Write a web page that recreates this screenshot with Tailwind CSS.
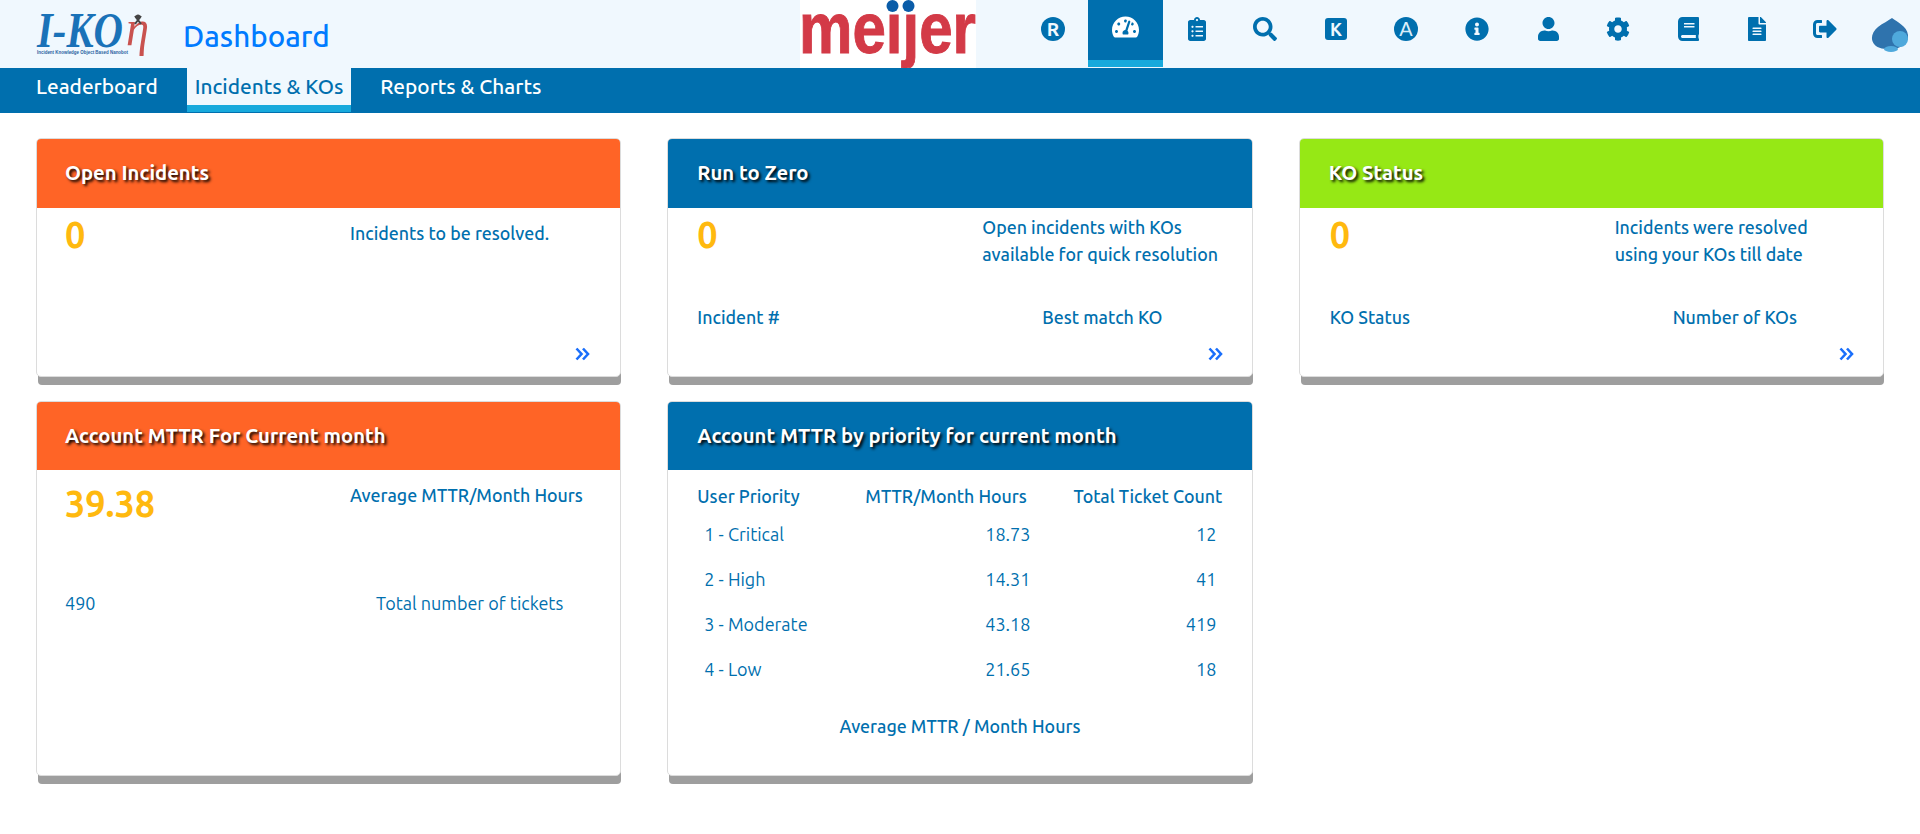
<!DOCTYPE html>
<html lang="en">
<head>
<meta charset="UTF-8">
<title>Dashboard</title>
<script src="https://cdn.jsdelivr.net/npm/@tailwindcss/browser@4"></script>
</head>
<body class="bg-white font-['Ubuntu','Noto_Sans',sans-serif] text-[#006fae] text-[18px] min-h-screen">

<!-- top bar -->
<header class="h-[68px] bg-[#f0f8fe] flex">
  <div class="w-[183px] shrink-0">
    <svg class="overflow-visible" width="183" height="68" viewBox="0 0 183 68">
      <text x="37" y="47" textLength="86" lengthAdjust="spacingAndGlyphs" font-family="Liberation Serif" font-style="italic" font-weight="700" font-size="50" fill="#1a72b8">I-KO</text>
      <text x="126" y="45" textLength="23" lengthAdjust="spacingAndGlyphs" font-family="Liberation Serif" font-style="italic" font-size="50" fill="#c9524f">η</text>
      <path d="M135 16l6 8M141 16l-6 8" stroke="#444" stroke-width="2"/>
      <circle cx="138" cy="17" r="2.500" fill="#444"/>
      <text x="37" y="54" textLength="91" lengthAdjust="spacingAndGlyphs" font-family="Liberation Sans" font-weight="700" font-size="5" fill="#2b5f9e">Incident Knowledge Object Based Nanobot</text>
    </svg>
  </div>
  <div class="w-[617px] shrink-0 text-[29.600px] font-medium text-[#007bff] leading-[72px]">Dashboard</div>
  <div class="w-[176px] shrink-0 bg-white">
    <svg class="overflow-visible" width="176" height="68" viewBox="0 0 176 68">
      <defs><clipPath id="meijer-clip"><rect x="0" y="13" width="176" height="55"/></clipPath></defs>
      <text x="-1" y="53" textLength="177" lengthAdjust="spacingAndGlyphs" clip-path="url(#meijer-clip)" font-family="Liberation Sans" font-weight="700" font-size="72" fill="#d33a47" stroke="#d33a47" stroke-width="1">meijer</text>
      <circle cx="92.500" cy="6" r="6" fill="#0a5ca8"/>
      <circle cx="108.500" cy="6" r="6" fill="#0a5ca8"/>
    </svg>
  </div>
  <div class="w-[41px] shrink-0"></div>
  <nav class="flex text-[#006fae]">
    <a class="w-[71px] h-[68px] flex items-center justify-center pb-[10px]">
      <svg class="h-6 w-6" viewBox="0 0 24 24"><circle cx="12" cy="12" r="12" fill="currentColor"/><text x="12" y="18.500" text-anchor="middle" font-family="Ubuntu" font-weight="700" font-size="19" fill="#f0f8fe">R</text></svg>
    </a>
    <a class="w-[75px] h-[67px] flex items-center justify-center pb-[7px] bg-[#006fae] border-b-[7px] border-[#17a9dc] text-white">
      <svg class="h-6" viewBox="0 0 576 512" fill="currentColor"><path d="M288 32C128.94 32 0 160.94 0 320c0 52.8 14.25 102.26 39.06 144.8 5.61 9.62 16.3 15.2 27.44 15.2h443c11.14 0 21.83-5.58 27.44-15.2C561.75 422.26 576 372.8 576 320c0-159.06-128.94-288-288-288zm0 64c14.71 0 26.58 10.13 30.32 23.65-1.11 2.26-2.64 4.23-3.45 6.67l-9.22 27.67c-5.13 3.49-10.97 6.01-17.64 6.01-17.67 0-32-14.33-32-32S270.33 96 288 96zM96 384c-17.67 0-32-14.33-32-32s14.33-32 32-32 32 14.33 32 32-14.33 32-32 32zm48-160c-17.67 0-32-14.33-32-32s14.33-32 32-32 32 14.33 32 32-14.33 32-32 32zm246.77-72.41l-61.33 184C343.13 347.33 352 364.54 352 384c0 11.72-3.38 22.55-8.88 32H232.88c-5.5-9.45-8.88-20.28-8.88-32 0-33.94 26.5-61.43 59.9-63.59l61.34-184.01c4.17-12.56 17.73-19.45 30.36-15.17 12.57 4.19 19.35 17.79 15.17 30.36zm14.66 57.2l15.52-46.55c3.47-1.29 7.13-2.23 11.05-2.23 17.67 0 32 14.33 32 32s-14.33 32-32 32c-11.38-.01-20.89-6.28-26.57-15.22zM480 384c-17.67 0-32-14.33-32-32s14.33-32 32-32 32 14.33 32 32-14.33 32-32 32z"/></svg>
    </a>
    <a class="w-[67px] h-[68px] flex items-center justify-center pb-[10px]">
      <svg class="h-6" viewBox="0 0 384 512" fill="currentColor"><path d="M336 64h-80c0-35.3-28.7-64-64-64s-64 28.7-64 64H48C21.5 64 0 85.5 0 112v352c0 26.5 21.5 48 48 48h288c26.5 0 48-21.5 48-48V112c0-26.500-21.500-48-48-48zM96 424c-13.300 0-24-10.700-24-24s10.700-24 24-24 24 10.700 24 24-10.700 24-24 24zm0-96c-13.300 0-24-10.700-24-24s10.700-24 24-24 24 10.700 24 24-10.700 24-24 24zm0-96c-13.300 0-24-10.700-24-24s10.700-24 24-24 24 10.700 24 24-10.700 24-24 24zm96-192c13.300 0 24 10.700 24 24s-10.700 24-24 24-24-10.700-24-24 10.700-24 24-24zm128 368c0 4.400-3.600 8-8 8H168c-4.400 0-8-3.600-8-8v-16c0-4.400 3.600-8 8-8h144c4.400 0 8 3.600 8 8v16zm0-96c0 4.400-3.600 8-8 8H168c-4.400 0-8-3.600-8-8v-16c0-4.400 3.600-8 8-8h144c4.400 0 8 3.600 8 8v16zm0-96c0 4.400-3.600 8-8 8H168c-4.400 0-8-3.600-8-8v-16c0-4.400 3.600-8 8-8h144c4.400 0 8 3.600 8 8v16z"/></svg>
    </a>
    <a class="w-[70px] h-[68px] flex items-center justify-center pb-[10px]">
      <svg class="h-6" viewBox="0 0 512 512" fill="currentColor"><path d="M505 442.700L405.300 343c-4.500-4.500-10.600-7-17-7H372c27.600-35.300 44-79.700 44-128C416 93.100 322.900 0 208 0S0 93.100 0 208s93.100 208 208 208c48.300 0 92.700-16.400 128-44v16.300c0 6.400 2.500 12.500 7 17l99.700 99.700c9.400 9.400 24.600 9.400 33.900 0l28.300-28.300c9.400-9.400 9.400-24.600.1-34zM208 336c-70.700 0-128-57.200-128-128 0-70.700 57.200-128 128-128 70.700 0 128 57.200 128 128 0 70.700-57.200 128-128 128z"/></svg>
    </a>
    <a class="w-[71px] h-[68px] flex items-center justify-center pb-[10px]">
      <svg class="h-6 w-[22px]" viewBox="0 0 22 24"><rect y="1" width="22" height="22" rx="3" fill="currentColor"/><text x="11" y="19" text-anchor="middle" font-family="Ubuntu" font-weight="700" font-size="18" fill="#f0f8fe">K</text></svg>
    </a>
    <a class="w-[70px] h-[68px] flex items-center justify-center pb-[10px]">
      <svg class="h-6 w-6" viewBox="0 0 24 24"><circle cx="12" cy="12" r="12" fill="currentColor"/><text x="12" y="18.500" text-anchor="middle" font-family="Liberation Sans" font-size="20" fill="#dbeefa">A</text></svg>
    </a>
    <a class="w-[72px] h-[68px] flex items-center justify-center pb-[10px]">
      <svg class="h-6" viewBox="0 0 512 512" fill="currentColor"><path d="M256 8C119.043 8 8 119.083 8 256c0 136.997 111.043 248 248 248s248-111.003 248-248C504 119.083 392.957 8 256 8zm0 110c23.196 0 42 18.804 42 42s-18.804 42-42 42-42-18.804-42-42 18.804-42 42-42zm56 254c0 6.627-5.373 12-12 12h-88c-6.627 0-12-5.373-12-12v-24c0-6.627 5.373-12 12-12h12v-64h-12c-6.627 0-12-5.373-12-12v-24c0-6.627 5.373-12 12-12h64c6.627 0 12 5.373 12 12v100h12c6.627 0 12 5.373 12 12v24z"/></svg>
    </a>
    <a class="w-[70px] h-[68px] flex items-center justify-center pb-[10px]">
      <svg class="h-6" viewBox="0 0 448 512" fill="currentColor"><path d="M224 256c70.700 0 128-57.300 128-128S294.700 0 224 0 96 57.300 96 128s57.300 128 128 128zm89.600 32h-16.700c-22.200 10.200-46.900 16-72.900 16s-50.600-5.800-72.900-16h-16.700C60.200 288 0 348.200 0 422.400V464c0 26.500 21.500 48 48 48h352c26.500 0 48-21.500 48-48v-41.600c0-74.200-60.200-134.400-134.400-134.400z"/></svg>
    </a>
    <a class="w-[70px] h-[68px] flex items-center justify-center pb-[10px]">
      <svg class="h-6" viewBox="0 0 512 512" fill="currentColor"><path d="M487.400 315.700l-42.600-24.600c4.300-23.200 4.300-47 0-70.200l42.600-24.600c4.900-2.800 7.100-8.600 5.500-14-11.100-35.600-30-67.800-54.700-94.600-3.800-4.100-10-5.100-14.800-2.300L380.800 110c-17.900-15.400-38.500-27.300-60.800-35.100V25.800c0-5.600-3.900-10.500-9.400-11.700-36.700-8.200-74.300-7.800-109.200 0-5.500 1.200-9.400 6.100-9.400 11.700V75c-22.200 7.900-42.800 19.800-60.800 35.100L88.700 85.500c-4.900-2.800-11-1.900-14.800 2.300-24.700 26.700-43.600 58.900-54.700 94.600-1.700 5.400.6 11.200 5.500 14L67.300 221c-4.300 23.200-4.300 47 0 70.200l-42.600 24.600c-4.900 2.800-7.100 8.600-5.500 14 11.100 35.600 30 67.800 54.700 94.600 3.800 4.100 10 5.100 14.800 2.300l42.600-24.600c17.900 15.400 38.500 27.300 60.800 35.100v49.200c0 5.600 3.900 10.500 9.400 11.700 36.700 8.200 74.300 7.800 109.200 0 5.500-1.200 9.400-6.100 9.400-11.700v-49.200c22.200-7.900 42.800-19.800 60.800-35.100l42.600 24.600c4.900 2.800 11 1.900 14.800-2.300 24.700-26.700 43.600-58.900 54.700-94.600 1.500-5.500-.7-11.300-5.600-14.100zM256 336c-44.100 0-80-35.900-80-80s35.900-80 80-80 80 35.900 80 80-35.900 80-80 80z"/></svg>
    </a>
    <a class="w-[71px] h-[68px] flex items-center justify-center pb-[10px]">
      <svg class="h-6" viewBox="0 0 448 512" fill="currentColor"><path d="M448 360V24c0-13.300-10.700-24-24-24H96C43 0 0 43 0 96v320c0 53 43 96 96 96h328c13.300 0 24-10.700 24-24v-16c0-7.500-3.500-14.300-8.900-18.700-4.200-15.400-4.200-59.300 0-74.700 5.400-4.300 8.900-11.100 8.900-18.600zM128 134c0-3.300 2.700-6 6-6h212c3.300 0 6 2.700 6 6v20c0 3.300-2.700 6-6 6H134c-3.300 0-6-2.700-6-6v-20zm0 64c0-3.300 2.700-6 6-6h212c3.300 0 6 2.700 6 6v20c0 3.300-2.700 6-6 6H134c-3.300 0-6-2.700-6-6v-20zm253.400 250H96c-17.700 0-32-14.300-32-32 0-17.600 14.400-32 32-32h285.400c-1.900 17.100-1.900 46.900 0 64z"/></svg>
    </a>
    <a class="w-[66px] h-[68px] flex items-center justify-center pb-[10px]">
      <svg class="h-6" viewBox="0 0 384 512" fill="currentColor"><path d="M224 136V0H24C10.700 0 0 10.700 0 24v464c0 13.300 10.700 24 24 24h336c13.300 0 24-10.700 24-24V160H248c-13.200 0-24-10.800-24-24zm64 236c0 6.600-5.400 12-12 12H108c-6.600 0-12-5.400-12-12v-8c0-6.600 5.400-12 12-12h168c6.600 0 12 5.400 12 12v8zm0-64c0 6.600-5.400 12-12 12H108c-6.600 0-12-5.400-12-12v-8c0-6.600 5.400-12 12-12h168c6.600 0 12 5.400 12 12v8zm0-72v8c0 6.600-5.400 12-12 12H108c-6.600 0-12-5.400-12-12v-8c0-6.600 5.400-12 12-12h168c6.600 0 12 5.400 12 12zm96-114.100v6.100H256V0h6.100c6.400 0 12.500 2.500 17 7l97.900 98c4.500 4.500 7 10.600 7 16.900z"/></svg>
    </a>
    <a class="w-[70px] h-[68px] flex items-center justify-center pb-[10px]">
      <svg class="h-6" viewBox="0 0 512 512" fill="currentColor"><path d="M497 273L329 441c-15 15-41 4.500-41-17v-96H152c-13.300 0-24-10.700-24-24v-96c0-13.300 10.700-24 24-24h136V88c0-21.400 25.900-32 41-17l168 168c9.300 9.400 9.300 24.600 0 34zM192 436v-40c0-6.600-5.400-12-12-12H96c-17.700 0-32-14.300-32-32V160c0-17.700 14.300-32 32-32h84c6.600 0 12-5.400 12-12V76c0-6.600-5.400-12-12-12H96c-53 0-96 43-96 96v192c0 53 43 96 96 96h84c6.600 0 12-5.400 12-12z"/></svg>
    </a>
    <a class="w-[60px] h-[68px] flex items-center justify-center">
      <svg class="w-[38px] h-[36px] mt-[1px] blur-[0.6px]" viewBox="0 0 38 36">
        <path d="M21 1 C26 5 36 9 37 18 C37.500 24 34 29 27 31 L20 32 C14 32 7 32 3 27 C-1 22 1 15 7 10 C12 6 17 4 21 1Z" fill="#2f73ad"/>
        <circle cx="29" cy="22" r="8" fill="#4fa9dc"/>
        <ellipse cx="20" cy="32" rx="7" ry="3" fill="#4fa9dc"/>
      </svg>
    </a>
  </nav>
</header>

<!-- sub nav -->
<nav class="h-[45px] bg-[#006fae] flex gap-[21px] pl-[28px] text-white text-[20.8px] font-medium">
  <a class="px-2 leading-[38px]">Leaderboard</a>
  <a class="px-2 h-[44px] leading-[38px] bg-[#f0f8fe] text-[#006fae] border-b-[7px] border-[#17a9dc]">Incidents &amp; KOs</a>
  <a class="px-2 leading-[38px]">Reports &amp; Charts</a>
</nav>

<!-- cards -->
<main class="grid grid-cols-3 gap-x-[46px] gap-y-[24px] px-[36px] pt-[25px] pb-[40px] items-start">

  <section class="h-[239px] flex flex-col bg-white border border-[#dcdcdc] rounded-[5px] shadow-[1px_9px_0_-1px_#9e9e9e] overflow-hidden">
    <h2 class="h-[70px] shrink-0 -mx-px -mt-px bg-[#ff6426] text-white text-[20.3px] font-bold leading-[70px] pl-[29px] [text-shadow:2px_2px_3px_#000]">Open Incidents</h2>
    <div class="grid grid-cols-[285px_1fr] pl-[28px] h-[96px] font-medium text-[17.8px]">
      <div class="text-[36px] font-bold text-[#ffb90f] leading-[48px] pt-[3px]">0</div>
      <div class="leading-[27px] pt-[12px]">Incidents to be resolved.</div>
    </div>
    <div class="h-[27px]"></div>
    <div class="flex justify-end pr-[30px] pt-[16px]">
      <svg class="w-[15px] h-[14px]" viewBox="0 0 15 14" fill="none" stroke="#1a6ffb" stroke-width="2.600"><path d="M1.500 1.500 6.500 7 1.500 12.500M8 1.500 13 7 8 12.500"/></svg>
    </div>
  </section>

  <section class="h-[239px] flex flex-col bg-white border border-[#dcdcdc] rounded-[5px] shadow-[1px_9px_0_-1px_#9e9e9e] overflow-hidden">
    <h2 class="h-[70px] shrink-0 -mx-px -mt-px bg-[#006fae] text-white text-[20.3px] font-bold leading-[70px] pl-[30px] [text-shadow:2px_2px_3px_#000]">Run to Zero</h2>
    <div class="grid grid-cols-[285px_1fr] pl-[29px] h-[96px] font-medium text-[17.8px]">
      <div class="text-[36px] font-bold text-[#ffb90f] leading-[48px] pt-[3px]">0</div>
      <div class="leading-[27px] pt-[6px]">Open incidents with KOs<br>available for quick resolution</div>
    </div>
    <div class="flex h-[27px] pl-[29px] font-medium text-[17.8px] leading-[27px]"><span class="w-[345px]">Incident #</span><span>Best match KO</span></div>
    <div class="flex justify-end pr-[29px] pt-[16px]">
      <svg class="w-[15px] h-[14px]" viewBox="0 0 15 14" fill="none" stroke="#1a6ffb" stroke-width="2.600"><path d="M1.500 1.500 6.500 7 1.500 12.500M8 1.500 13 7 8 12.500"/></svg>
    </div>
  </section>

  <section class="h-[239px] flex flex-col bg-white border border-[#dcdcdc] rounded-[5px] shadow-[1px_9px_0_-1px_#9e9e9e] overflow-hidden">
    <h2 class="h-[70px] shrink-0 -mx-px -mt-px bg-[#96e815] text-white text-[20.3px] font-bold leading-[70px] pl-[30px] [text-shadow:2px_2px_3px_#000]">KO Status</h2>
    <div class="grid grid-cols-[285px_1fr] pl-[30px] h-[96px] font-medium text-[17.8px]">
      <div class="text-[36px] font-bold text-[#ffb90f] leading-[48px] pt-[3px]">0</div>
      <div class="leading-[27px] pt-[6px]">Incidents were resolved<br>using your KOs till date</div>
    </div>
    <div class="flex h-[27px] pl-[30px] font-medium text-[17.8px] leading-[27px]"><span class="w-[343px]">KO Status</span><span>Number of KOs</span></div>
    <div class="flex justify-end pr-[29px] pt-[16px]">
      <svg class="w-[15px] h-[14px]" viewBox="0 0 15 14" fill="none" stroke="#1a6ffb" stroke-width="2.600"><path d="M1.500 1.500 6.500 7 1.500 12.500M8 1.500 13 7 8 12.500"/></svg>
    </div>
  </section>

  <section class="h-[375px] flex flex-col bg-white border border-[#dcdcdc] rounded-[5px] shadow-[1px_9px_0_-1px_#9e9e9e] overflow-hidden">
    <h2 class="h-[69px] shrink-0 -mx-px -mt-px bg-[#ff6426] text-white text-[20.3px] font-bold leading-[69px] pl-[29px] [text-shadow:2px_2px_3px_#000]">Account MTTR For Current month</h2>
    <div class="grid grid-cols-[285px_1fr] pl-[28px] h-[120px] font-medium text-[17.8px]">
      <div class="text-[36px] font-bold text-[#ffb90f] leading-[48px] pt-[10px]">39.38</div>
      <div class="leading-[27px] pt-[12px]">Average MTTR/Month Hours</div>
    </div>
    <div class="flex pl-[28px] leading-[27px]"><span class="w-[311px]">490</span><span>Total number of tickets</span></div>
  </section>

  <section class="h-[375px] flex flex-col bg-white border border-[#dcdcdc] rounded-[5px] shadow-[1px_9px_0_-1px_#9e9e9e] overflow-hidden">
    <h2 class="h-[69px] shrink-0 -mx-px -mt-px bg-[#006fae] text-white text-[20.3px] font-bold leading-[69px] pl-[30px] [text-shadow:2px_2px_3px_#000]">Account MTTR by priority for current month</h2>
    <div class="grid grid-cols-[168px_165px_192px] ml-[29px] mt-[13px] font-medium text-[17.8px] leading-[27px] w-[525px]">
      <span>User Priority</span><span>MTTR/Month Hours</span><span class="text-right">Total Ticket Count</span>
    </div>
    <div class="grid grid-cols-[168px_165px_192px] ml-[29px] mt-[11px] w-[525px] leading-[27px] auto-rows-[45px]">
      <span class="pl-[7px]">1 - Critical</span><span class="text-right">18.73</span><span class="text-right pr-[6px]">12</span>
      <span class="pl-[7px]">2 - High</span><span class="text-right">14.31</span><span class="text-right pr-[6px]">41</span>
      <span class="pl-[7px]">3 - Moderate</span><span class="text-right">43.18</span><span class="text-right pr-[6px]">419</span>
      <span class="pl-[7px]">4 - Low</span><span class="text-right">21.65</span><span class="text-right pr-[6px]">18</span>
    </div>
    <div class="text-center font-medium text-[17.8px] leading-[27px] mt-[12px]">Average MTTR / Month Hours</div>
  </section>

</main>
</body>
</html>
